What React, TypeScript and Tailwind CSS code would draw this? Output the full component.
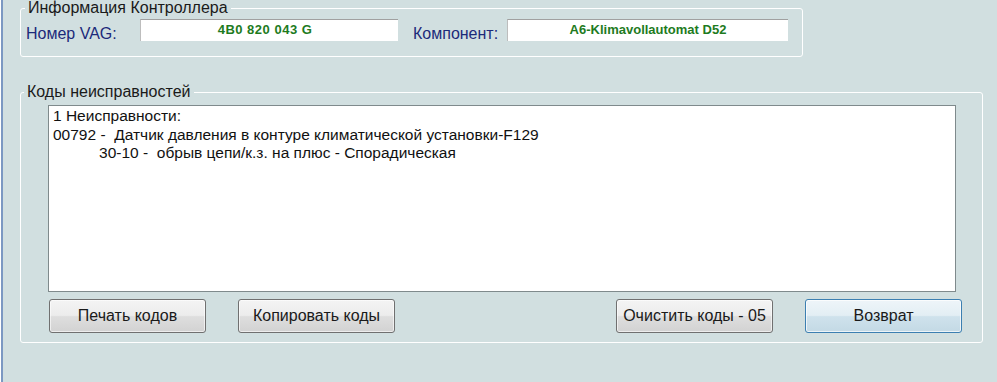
import React from "react";

const font = { fontFamily: '"Liberation Sans", Arial, sans-serif' };

const faults = [
  { text: "1 Неисправности:", indent: "" },
  { text: "00792 -  Датчик давления в контуре климатической установки-F129", indent: "" },
  { text: "          30-10 -  обрыв цепи/к.з. на плюс - Спорадическая", indent: "pl-[3px]" },
];

function Button({ text, active }: { text: string; active?: boolean }) {
  return (
    <button
      className={
        active
          ? "w-[157px] h-[34px] rounded-[3px] border border-[#3c7fb1] bg-[linear-gradient(to_bottom,#eef5f9_0%,#e3eef4_48%,#cfe2ec_52%,#c3d9e5_100%)] text-[16px] text-[#1a1a1a] shadow-[inset_0_0_0_1px_rgba(255,255,255,0.7)]"
          : "w-[157px] h-[34px] rounded-[3px] border border-[#707070] bg-[linear-gradient(to_bottom,#f4f4f4_0%,#ececec_48%,#dedede_52%,#d2d2d2_100%)] text-[16px] text-[#1a1a1a] shadow-[inset_0_0_0_1px_rgba(255,255,255,0.6)]"
      }
    >
      {text}
    </button>
  );
}

export default function App() {
  return (
    <div className="h-[382px] ml-px border-l-2 border-l-[#7b98c2] bg-[#d1dfe0] overflow-hidden" style={font}>
      {/* Информация Контроллера */}
      <fieldset className="ml-[17px] w-[783px] border border-white rounded-[3px]">
        <legend className="ml-[4px] px-[3px] text-[16px] leading-[16px] text-[#1a1a1a]">
          Информация Контроллера
        </legend>
        <div className="flex items-start pl-[5px] pt-[3px] pb-[13px]">
          <span className="w-[114px] mt-[6px] text-[16px] leading-[18px] text-[#1c2a7a]">Номер VAG:</span>
          <div className="w-[258px] h-[22px] bg-white border-t border-l border-t-[#a0a0a0] border-l-[#bdbdbd] pr-[9px] text-center text-[13px] leading-[20px] font-bold tracking-[0.5px] text-[#1e7b1e]">
            4B0 820 043 G
          </div>
          <span className="ml-[15px] w-[94px] mt-[6px] text-[16px] leading-[18px] text-[#1c2a7a]">Компонент:</span>
          <div className="w-[281px] h-[22px] bg-white border-t border-l border-t-[#a0a0a0] border-l-[#bdbdbd] text-center text-[13px] leading-[20px] font-bold text-[#1e7b1e]">
            A6-Klimavollautomat D52
          </div>
        </div>
      </fieldset>

      {/* Коды неисправностей */}
      <fieldset className="ml-[17px] mt-[27px] w-[963px] border border-white rounded-[3px]">
        <legend className="ml-[3px] px-[3px] text-[16px] leading-[16px] text-[#1a1a1a]">
          Коды неисправностей
        </legend>
        <div className="pl-[27px] pt-[5px]">
          <div className="w-[908px] h-[187px] bg-white border border-[#7f8a8c] px-[4px] pt-[1px] text-[15.5px] leading-[18.5px] text-[#111]">
            {faults.map((line) => (
              <div key={line.text} className={"whitespace-pre " + line.indent}>
                {line.text}
              </div>
            ))}
          </div>
        </div>
        <div className="flex justify-between pl-[28px] pr-[20px] mt-[7px] pb-[9px]">
          <div className="flex gap-[32px]">
            <Button text="Печать кодов" />
            <Button text="Копировать коды" />
          </div>
          <div className="flex gap-[32px]">
            <Button text="Очистить коды - 05" />
            <Button text="Возврат" active />
          </div>
        </div>
      </fieldset>
    </div>
  );
}
